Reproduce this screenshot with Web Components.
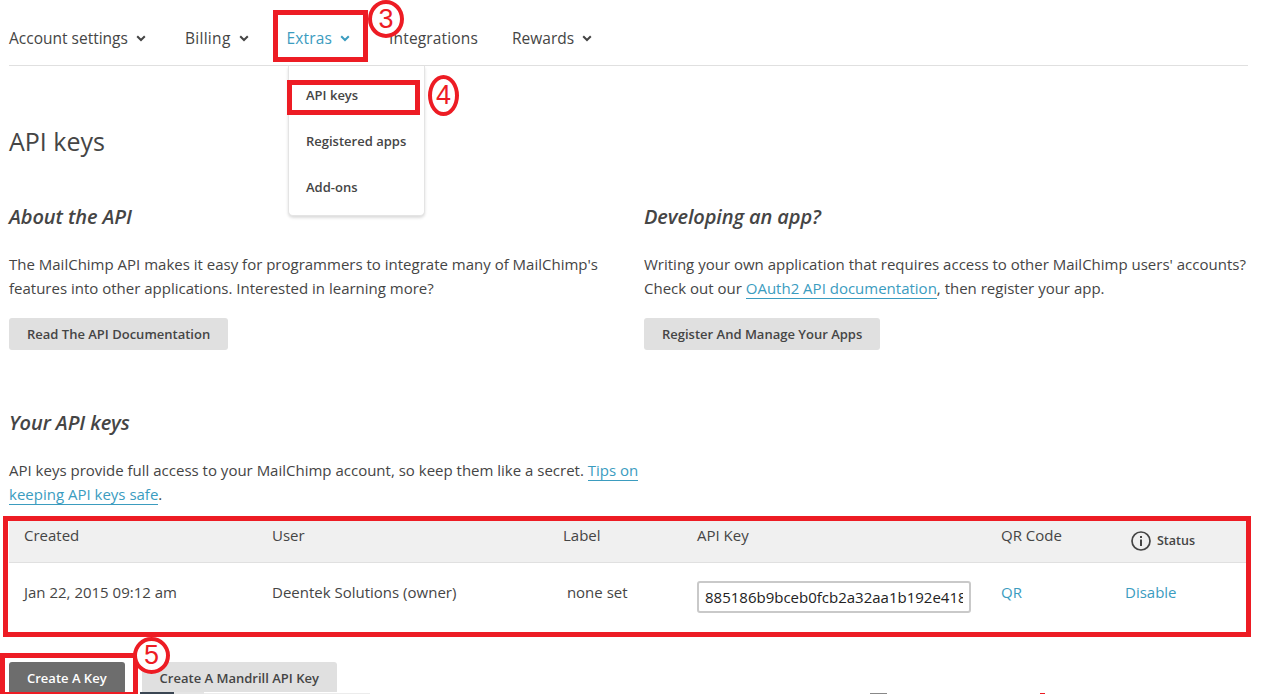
<!doctype html>
<html>
<head>
<meta charset="utf-8">
<title>API keys</title>
<style>
  html, body { margin: 0; padding: 0; background: #fff; }
  body {
    width: 1263px; height: 694px; overflow: hidden; position: relative;
    font-family: "Open Sans", sans-serif; color: #454545;
  }
</style>
</head>
<body>
<account-nav>
  <nav-item>Account settings</nav-item>
  <nav-item>Billing</nav-item>
  <nav-item active>Extras</nav-item>
  <nav-item plain>Integrations</nav-item>
  <nav-item>Rewards</nav-item>
</account-nav>
<keys-page></keys-page>
<script>
const CHEVRON = `<svg width="10" height="7" viewBox="0 0 10 7"><path d="M1.2 1.2 5 5 8.8 1.2" fill="none" stroke="currentColor" stroke-width="2"/></svg>`;

class NavItem extends HTMLElement {
  constructor() {
    super();
    this.attachShadow({ mode: "open" }).innerHTML = `<style>
      :host { display: flex; align-items: center; gap: 8px; font-size: 15.5px; font-weight: 500; color: #454545; }
      :host([active]) { color: #3b9cbf; }
      :host([plain]) svg { display: none; }
      svg { display: block; margin-top: 1px; }
    </style><slot></slot>${CHEVRON}`;
  }
}

class AccountNav extends HTMLElement {
  constructor() {
    super();
    this.attachShadow({ mode: "open" }).innerHTML = `<style>
      :host {
        display: flex; gap: 38px; height: 65px; align-items: center; box-sizing: border-box; padding-top: 11px;
        margin: 0 15px 1px 9px; box-shadow: 0 1px 0 #e0e0e0;
      }
      ::slotted(nav-item:nth-child(1)) { margin-right: 1px; }
      ::slotted(nav-item:nth-child(2)) { letter-spacing: .3px; }
      ::slotted(nav-item:nth-child(3)) { letter-spacing: .15px; margin-right: 1px; }
      ::slotted(nav-item:nth-child(4)) { letter-spacing: .15px; margin-right: -4px; }
    </style><slot></slot>`;
  }
}

class DropMenu extends HTMLElement {
  constructor() {
    super();
    this.attachShadow({ mode: "open" }).innerHTML = `<style>
      :host {
        display: flex; flex-direction: column; position: absolute; left: 288px; top: 66px; width: 137px; height: 150px;
        padding-top: 6px; box-sizing: border-box; background: #fff; border: 1px solid #e4e4e4; border-top: 0;
        border-radius: 0 0 5px 5px; box-shadow: 0 2px 3px rgba(0,0,0,.14);
      }
      ::slotted(span) { display: block; height: 46px; line-height: 46px; padding-left: 17px; font-size: 13px; font-weight: 600; color: #454545; }
    </style><slot></slot>`;
  }
}

class PlainButton extends HTMLElement {
  constructor() {
    super();
    this.attachShadow({ mode: "open" }).innerHTML = `<style>
      :host {
        display: inline-flex; align-items: center; height: 32px; padding: 0 18px; box-sizing: border-box;
        background: #e0e0e0; border-radius: 3px; font-size: 13px; font-weight: 600; color: #454545;
      }
      :host([dark]) { background: #6d6d6d; color: #fff; }
    </style><slot></slot>`;
  }
}

class InfoBlock extends HTMLElement {
  constructor() {
    super();
    this.attachShadow({ mode: "open" }).innerHTML = `<style>
      :host { display: block; }
      h3 { margin: 0; font-size: 20px; line-height: 28px; font-style: italic; font-weight: 600; letter-spacing: -.1px; color: #454545; }
      p { margin: 21px 0 18px; font-size: 15px; line-height: 24px; }
      ::slotted(a) { color: #3b9cbf; border-bottom: 1px solid #3b9cbf; }
    </style><h3></h3><p><slot></slot></p><slot name="action"></slot>`;
    this.shadowRoot.querySelector("h3").textContent = this.getAttribute("heading");
  }
}

class KeysTable extends HTMLElement {
  constructor() {
    super();
    this.attachShadow({ mode: "open" }).innerHTML = `<style>
      :host { display: block; font-size: 15px; color: #454545; }
      .row { display: grid; grid-template-columns: 248px 291px 134px 304px 124px 1fr; padding-left: 15px; }
      .head { height: 45px; background: #f0f0f0; border-bottom: 1px solid #e0e0e0; box-sizing: border-box; padding-top: 7px; margin-top: -1px; line-height: 20px; }
      .body { height: 66px; padding-top: 19px; box-sizing: border-box; line-height: 20px; }
      .status { display: flex; align-items: center; gap: 6px; padding: 0 0 0 6px; margin-top: 5px; font-size: 12.5px; font-weight: 600; height: 22px; }
      .status svg { display: block; }
      .key {
        width: 274px; height: 32px; box-sizing: border-box; margin-top: -1px; padding: 0 6px; background: #fff; color: #222;
        border: 2px solid #c9c9c9; border-radius: 3px; font: 15px "Open Sans", sans-serif; outline: 0;
      }
      a { color: #3b9cbf; }
    </style>
    <div class="row head">
      <span>Created</span><span>User</span><span>Label</span><span>API Key</span><span>QR Code</span>
      <span class="status">
        <svg width="20" height="20" viewBox="0 0 20 20"><circle cx="10" cy="10" r="9" fill="none" stroke="#444" stroke-width="1.7"/><rect x="9" y="8.5" width="2" height="6.5" fill="#444"/><rect x="9" y="5" width="2" height="2" fill="#444"/></svg>Status
      </span>
    </div>
    <div class="row body">
      <span>Jan 22, 2015 09:12 am</span><span>Deentek Solutions (owner)</span><span>&nbsp;none set</span>
      <span><input class="key" value="885186b9bceb0fcb2a32aa1b192e418a-us9" readonly></span>
      <a>QR</a><a>Disable</a>
    </div>`;
  }
}

class CalloutBox extends HTMLElement {
  constructor() {
    super();
    this.attachShadow({ mode: "open" }).innerHTML = `<style>
      :host { display: block; position: absolute; box-sizing: border-box; border: 5px solid #ed1c24; pointer-events: none; }
    </style>`;
  }
}

class CalloutNum extends HTMLElement {
  constructor() {
    super();
    this.attachShadow({ mode: "open" }).innerHTML = `<style>
      :host {
        display: flex; position: absolute; box-sizing: border-box; align-items: center; justify-content: center;
        border: 4px solid #ed1c24; border-radius: 50%; background: #fff; color: #ed1c24;
        font: 27px/1 "Liberation Sans", sans-serif;
      }
    </style><slot></slot>`;
  }
}

// the screenshot was cut at y=692, the next picture starts peeking in below that
class CutStrip extends HTMLElement {
  constructor() {
    super();
    this.attachShadow({ mode: "open" }).innerHTML = `<style>
      :host {
        display: block; position: absolute; left: 0; top: 692px; width: 1263px; height: 2px;
        background:
          linear-gradient(#3a4552, #3a4552) 140px 0 / 34px 2px no-repeat,
          linear-gradient(#e4e4e4, #e4e4e4) 174px 0 / 30px 2px no-repeat,
          linear-gradient(#ececec, #ececec) 204px 1px / 166px 1px no-repeat,
          linear-gradient(#888, #888) 870px 1px / 17px 1px no-repeat,
          linear-gradient(#ed1c24, #ed1c24) 1040px 1px / 5px 1px no-repeat,
          #fff;
      }
    </style>`;
  }
}

class KeysPage extends HTMLElement {
  constructor() {
    super();
    this.attachShadow({ mode: "open" }).innerHTML = `<style>
      :host { display: block; padding: 0 16px 0 9px; }
      h1 { margin: 0; padding-top: 57px; font-size: 25px; line-height: 36px; font-weight: 500; color: #454545; height: 36px; }
      .cols { display: grid; grid-template-columns: 635px 1fr; margin-top: 44px; }
      .keys { margin-top: 59px; }
      .keys p { margin: 21px 0 0; width: 650px; font-size: 15px; line-height: 24px; }
      h3 { margin: 0; font-size: 20px; line-height: 28px; font-style: italic; font-weight: 600; letter-spacing: -.1px; }
      a { color: #3b9cbf; border-bottom: 1px solid #3b9cbf; }
      keys-table { margin: 13px 0 0; }
      .actions { display: flex; gap: 17px; margin-top: 33px; }
    </style>
    <h1>API keys</h1>
    <div class="cols">
      <info-block heading="About the API">
        The MailChimp API makes it easy for programmers to integrate many of MailChimp's<br>features into other applications. Interested in learning more?
        <plain-button slot="action">Read The API Documentation</plain-button>
      </info-block>
      <info-block heading="Developing an app?">
        Writing your own application that requires access to other MailChimp users' accounts?<br>Check out our <a>OAuth2 API documentation</a>, then register your app.
        <plain-button slot="action">Register And Manage Your Apps</plain-button>
      </info-block>
    </div>
    <div class="keys">
      <h3>Your API keys</h3>
      <p>API keys provide full access to your MailChimp account, so keep them like a secret. <a>Tips on keeping API keys safe</a>.</p>
      <keys-table></keys-table>
      <div class="actions">
        <plain-button dark>Create A Key</plain-button>
        <plain-button>Create A Mandrill API Key</plain-button>
      </div>
    </div>`;
  }
}

customElements.define("nav-item", NavItem);
customElements.define("account-nav", AccountNav);
customElements.define("drop-menu", DropMenu);
customElements.define("plain-button", PlainButton);
customElements.define("info-block", InfoBlock);
customElements.define("keys-table", KeysTable);
customElements.define("callout-box", CalloutBox);
customElements.define("callout-num", CalloutNum);
customElements.define("cut-strip", CutStrip);
customElements.define("keys-page", KeysPage);

// overlays: the menu and the red annotations sit on top of the page
const overlay = `
  <drop-menu><span>API keys</span><span>Registered apps</span><span>Add-ons</span></drop-menu>
  <callout-box style="left:273px;top:10px;width:95px;height:52px"></callout-box>
  <callout-num style="left:368px;top:0;width:36px;height:38px">3</callout-num>
  <callout-box style="left:287px;top:80px;width:133px;height:35px"></callout-box>
  <callout-num style="left:428px;top:75px;width:31px;height:41px">4</callout-num>
  <callout-box style="left:3px;top:516px;width:1248px;height:121px"></callout-box>
  <cut-strip></cut-strip>
  <callout-box style="left:0;top:653px;width:138px;height:44px"></callout-box>
  <callout-num style="left:133px;top:637px;width:37px;height:37px">5</callout-num>`;
document.body.insertAdjacentHTML("beforeend", overlay);
</script>
</body>
</html>
